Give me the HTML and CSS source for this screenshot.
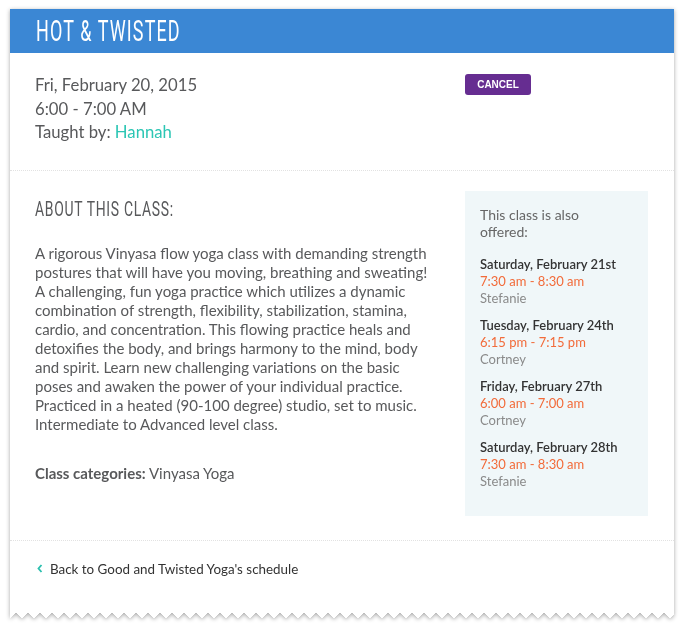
FILE: index.html
```html
<!DOCTYPE html>
<html>
  <head>
    <title>Hot &amp; Twisted</title>
    <link rel="stylesheet" href="styles.css">
  </head>
  <body>
    <div class="card-wrap">
      <div class="card">
        <h1 class="card-title"><span class="narrow">HOT &amp; TWISTED</span></h1>

        <div class="section top">
          <div class="main">
            <p class="when">
              Fri, February 20, 2015<br>
              6:00 - 7:00 AM<br>
              Taught by: <a href="#" class="teacher">Hannah</a>
            </p>
          </div>
          <div class="side">
            <a href="#" class="cancel">CANCEL</a>
          </div>
        </div>

        <div class="section middle">
          <div class="main">
            <h2><span class="narrow">ABOUT THIS CLASS:</span></h2>
            <p class="desc">
              A rigorous Vinyasa flow yoga class with demanding strength postures that will have you moving, breathing and sweating!
              A challenging, fun yoga practice which utilizes a dynamic combination of strength, flexibility, stabilization, stamina,
              cardio, and concentration. This flowing practice heals and detoxifies the body, and brings harmony to the mind, body
              and spirit. Learn new challenging variations on the basic poses and awaken the power of your individual practice.
              Practiced in a heated (90-100 degree) studio, set to music. Intermediate to Advanced level class.
            </p>
            <p class="cats"><b>Class categories:</b> Vinyasa Yoga</p>
          </div>
          <div class="side">
            <div class="also">
              <p class="also-title">This class is also offered:</p>
              <div class="slot">
                <div class="day">Saturday, February 21st</div>
                <div class="time">7:30 am - 8:30 am</div>
                <div class="who">Stefanie</div>
              </div>
              <div class="slot">
                <div class="day">Tuesday, February 24th</div>
                <div class="time">6:15 pm - 7:15 pm</div>
                <div class="who">Cortney</div>
              </div>
              <div class="slot">
                <div class="day">Friday, February 27th</div>
                <div class="time">6:00 am - 7:00 am</div>
                <div class="who">Cortney</div>
              </div>
              <div class="slot">
                <div class="day">Saturday, February 28th</div>
                <div class="time">7:30 am - 8:30 am</div>
                <div class="who">Stefanie</div>
              </div>
            </div>
          </div>
        </div>

        <div class="section bottom">
          <a href="#" class="back">
            <svg width="6" height="9" viewBox="0 0 6 9"><polyline points="4.5,1 1.5,4.5 4.5,8" fill="none" stroke="#2bbfae" stroke-width="1.8"/></svg>
            Back to Good and Twisted Yoga's schedule
          </a>
        </div>
      </div>
    </div>
  </body>
</html>
```

FILE: styles.css
```css
body {
    margin: 0;
    background: #fff;
    font-family: Lato, "Noto Sans", sans-serif;
    color: #58595b;
}
.card-wrap {
    padding: 9px 15px 20px 10px;
    filter: drop-shadow(0 1px 2px rgba(0, 0, 0, 0.35));
}
.card {
    width: 664px;
    background: #fff;
    position: relative;
}
/* zigzag bottom edge */
.card::after {
    content: "";
    position: absolute;
    left: 0;
    right: 0;
    bottom: -5px;
    height: 5px;
    background:
        linear-gradient(135deg, #fff 25%, transparent 25%) 0 0 / 12px 12px repeat-x,
        linear-gradient(-135deg, #fff 25%, transparent 25%) 0 0 / 12px 12px repeat-x;
}
.narrow {
    display: inline-block;
    font-family: Roboto, sans-serif;
    transform-origin: left center;
    white-space: nowrap;
}
.card-title {
    margin: 0;
    height: 44px;
    background: #3b87d4;
    color: #fff;
    font-weight: normal;
    font-size: 29px;
    line-height: 42px;
    padding-left: 26px;
}
.card-title .narrow {
    letter-spacing: 1.8px;
    transform: scaleX(0.62);
}
.section {
    display: flex;
    gap: 25px;
    padding: 0 26px 0 25px;
}
.main {
    flex: 1;
}
.side {
    width: 183px;
}
.top {
    padding-top: 21px;
    padding-bottom: 25px;
    border-bottom: 1px dotted #e2e2e2;
}
.when {
    margin: 0;
    font-size: 16.7px;
    line-height: 23.5px;
}
.teacher {
    color: #2cc6b4;
    text-decoration: none;
}
.cancel {
    display: block;
    width: 66px;
    height: 21px;
    line-height: 21px;
    text-align: center;
    background: #662d91;
    color: #fff;
    font-family: "Liberation Sans", Arial, sans-serif;
    font-weight: bold;
    font-size: 10px;
    border-radius: 3px;
    text-decoration: none;
}
.middle {
    padding-top: 20px;
    padding-bottom: 24px;
    border-bottom: 1px dotted #e2e2e2;
}
.middle h2 {
    margin: 6px 0 0;
    font-weight: normal;
    font-size: 20.5px;
    line-height: 22px;
}
.middle h2 .narrow {
    letter-spacing: 1px;
    transform: scaleX(0.68);
}
.desc {
    margin: 24px 0 0;
    font-size: 15px;
    line-height: 19.1px;
}
.cats {
    margin: 30px 0 0;
    font-size: 15px;
    line-height: 19px;
}
.also {
    background: #f0f7f9;
    padding: 15px 15px 16px;
    font-size: 13px;
    line-height: 17px;
}
.also-title {
    width: 120px;
    margin: 0 0 16px;
    font-size: 14px;
    color: #666;
}
.slot {
    margin-bottom: 10px;
}
.day {
    color: #333;
    font-weight: 600;
}
.time {
    color: #f26b3a;
}
.who {
    color: #8a8a8a;
}
.bottom {
    padding-top: 20px;
    padding-bottom: 36px;
}
.back {
    display: flex;
    align-items: center;
    gap: 7px;
    padding-left: 2px;
    color: #333;
    text-decoration: none;
    font-size: 13.4px;
    line-height: 16px;
}
```
